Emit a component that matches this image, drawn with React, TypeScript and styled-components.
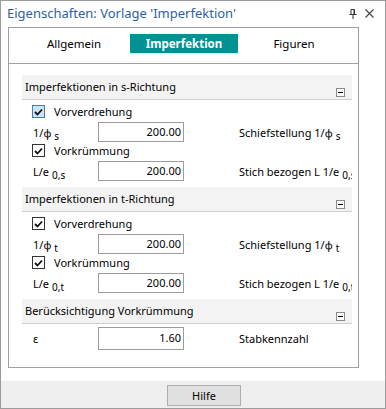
import React from 'react';
import styled, { createGlobalStyle } from 'styled-components';

interface Field {
  kind: 'check' | 'value';
  label: string;
  sub?: string;
  value?: string;
  hint?: string;
  hintSub?: string;
  checked?: boolean;
  focus?: boolean;
}

interface SectionData {
  title: string;
  rows: Field[];
  tall?: boolean;
}

const sections: SectionData[] = [
  {
    title: 'Imperfektionen in s-Richtung',
    rows: [
      { kind: 'check', label: 'Vorverdrehung', checked: true, focus: true },
      { kind: 'value', label: '1/φ', sub: 's', value: '200.00', hint: 'Schiefstellung 1/φ', hintSub: 's' },
      { kind: 'check', label: 'Vorkrümmung', checked: true },
      { kind: 'value', label: 'L/e', sub: '0,s', value: '200.00', hint: 'Stich bezogen L 1/e', hintSub: '0,s' },
    ],
  },
  {
    title: 'Imperfektionen in t-Richtung',
    rows: [
      { kind: 'check', label: 'Vorverdrehung', checked: true },
      { kind: 'value', label: '1/φ', sub: 't', value: '200.00', hint: 'Schiefstellung 1/φ', hintSub: 't' },
      { kind: 'check', label: 'Vorkrümmung', checked: true },
      { kind: 'value', label: 'L/e', sub: '0,t', value: '200.00', hint: 'Stich bezogen L 1/e', hintSub: '0,t' },
    ],
  },
  {
    title: 'Berücksichtigung Vorkrümmung',
    tall: true,
    rows: [
      { kind: 'value', label: 'ε', value: '1.60', hint: 'Stabkennzahl' },
    ],
  },
];

const tabs = ['Allgemein', 'Imperfektion', 'Figuren'];

const App: React.FC = () => {
  return (
    <>
      <GlobalStyle />
      <Window>
        <TitleBar>
          <Title>Eigenschaften: Vorlage 'Imperfektion'</Title>
          <TitleButtons>
            <svg width="8" height="10" viewBox="0 0 8 10">
              <path d="M2 0.5 V5.5 M5.5 0.5 V5.5 M0.5 5.5 H7.5 M2 0.5 H5.5 M4 5.5 V10" stroke="#333" strokeWidth="1" fill="none" />
              <rect x="4.5" y="1" width="1" height="4.5" fill="#333" />
            </svg>
            <svg width="9" height="9" viewBox="0 0 9 9">
              <path d="M0.5 0.5 L8.5 8.5 M8.5 0.5 L0.5 8.5" stroke="#444" strokeWidth="1.1" fill="none" />
            </svg>
          </TitleButtons>
        </TitleBar>
        <Body>
          <Panel>
            <TabBar>
              {tabs.map(t => (
                <Tab key={t} active={t === 'Imperfektion'}>{t}</Tab>
              ))}
            </TabBar>
            <Content>
              {sections.map(s => (
                <Section key={s.title}>
                  <SectionHeader>
                    <span>{s.title}</span>
                    <CollapseBox />
                  </SectionHeader>
                  <SectionBody tall={s.tall}>
                    {s.rows.map((r, i) =>
                      r.kind === 'check' ? (
                        <CheckRow key={i}>
                          <CheckBox focus={r.focus}>
                            {r.checked && (
                              <svg width="9" height="8" viewBox="0 0 9 8">
                                <path d="M1 4 L3.5 6.5 L8 1.5" stroke="#111" strokeWidth="1.8" fill="none" />
                              </svg>
                            )}
                          </CheckBox>
                          <span>{r.label}</span>
                        </CheckRow>
                      ) : (
                        <FieldRow key={i} tall={s.tall}>
                          <FieldLabel>
                            {r.label}
                            {r.sub && <Sub>{r.sub}</Sub>}
                          </FieldLabel>
                          <NumberBox tall={s.tall}>{r.value}</NumberBox>
                          <Hint>
                            {r.hint}
                            {r.hintSub && <Sub>{r.hintSub}</Sub>}
                          </Hint>
                        </FieldRow>
                      )
                    )}
                  </SectionBody>
                </Section>
              ))}
            </Content>
          </Panel>
        </Body>
        <Footer>
          <HelpButton>Hilfe</HelpButton>
        </Footer>
      </Window>
    </>
  );
};

const GlobalStyle = createGlobalStyle`
  html, body {
    margin: 0;
    padding: 0;
    background: #ffffff;
  }
  body {
    font-family: "Noto Sans", "Open Sans", sans-serif;
    font-size: 11px;
    color: #000;
  }
  * {
    box-sizing: border-box;
  }
`;

const Window = styled.div`
  width: 386px;
  height: 409px;
  border: 1px solid #9b9b9b;
  background: #fff;
  display: flex;
  flex-direction: column;
  overflow: hidden;
`;

const TitleBar = styled.div`
  height: 26px;
  display: flex;
  align-items: center;
  justify-content: space-between;
  padding: 0 11px 2px 6px;
`;

const Title = styled.span`
  font-size: 13px;
  color: #2f5fa3;
  white-space: nowrap;
`;

const TitleButtons = styled.div`
  display: flex;
  align-items: center;
  gap: 8px;
  margin-top: 1px;
`;

const Body = styled.div`
  padding: 0 26px 0 7px;
  height: 354px;
`;

const Panel = styled.div`
  width: 351px;
  height: 341px;
  border: 1px solid #a0a0a0;
  display: flex;
  flex-direction: column;
`;

const TabBar = styled.div`
  height: 36px;
  border-bottom: 1px solid #a0a0a0;
  display: flex;
  gap: 2px;
  padding: 6px 0 0 11px;
`;

const Tab = styled.div<{ active?: boolean }>`
  width: 108px;
  height: 19px;
  display: flex;
  align-items: center;
  justify-content: center;
  font-size: 11.5px;
  font-weight: ${({ active }) => (active ? 700 : 400)};
  color: ${({ active }) => (active ? '#fff' : '#000')};
  background: ${({ active }) => (active ? '#009292' : 'transparent')};
`;

const Content = styled.div`
  padding: 11px 6px 0 13px;
  display: flex;
  flex-direction: column;
`;

const Section = styled.div`
  display: flex;
  flex-direction: column;
  overflow: hidden;
`;

const SectionHeader = styled.div`
  position: relative;
  height: 25px;
  background: #f3f3f3;
  border-bottom: 1px solid #cfcfcf;
  padding: 0 0 2px 3px;
  display: flex;
  align-items: center;
  white-space: nowrap;
`;

const CollapseBox = styled.div`
  position: absolute;
  right: 7px;
  bottom: 2px;
  width: 9px;
  height: 9px;
  border: 1px solid #8a8a8a;
  background: #fff;
  &::after {
    content: '';
    position: absolute;
    left: 1px;
    right: 1px;
    top: 3px;
    height: 1px;
    background: #000;
  }
`;

const SectionBody = styled.div<{ tall?: boolean }>`
  display: flex;
  flex-direction: column;
  padding: ${({ tall }) => (tall ? '1px 0 0' : '3px 0 6px')};
`;

const CheckRow = styled.div`
  height: 17px;
  display: flex;
  align-items: center;
  gap: 9px;
  padding-left: 10px;
  white-space: nowrap;
`;

const CheckBox = styled.div<{ focus?: boolean }>`
  width: 13px;
  height: 13px;
  flex-shrink: 0;
  border: 1px solid ${({ focus }) => (focus ? '#3f7fb8' : '#333')};
  background: ${({ focus }) => (focus ? '#cce4f7' : '#fff')};
  display: flex;
  align-items: center;
  justify-content: center;
`;

const FieldRow = styled.div<{ tall?: boolean }>`
  height: ${({ tall }) => (tall ? '23px' : '20px')};
  margin-top: 2px;
  display: flex;
  align-items: center;
  padding-left: 11px;
  white-space: nowrap;
`;

const FieldLabel = styled.div`
  width: 65px;
  flex-shrink: 0;
`;

const Sub = styled.span`
  font-size: 10px;
  margin-left: 3px;
  position: relative;
  top: 3px;
`;

const NumberBox = styled.div<{ tall?: boolean }>`
  width: 86px;
  flex-shrink: 0;
  height: ${({ tall }) => (tall ? '23px' : '20px')};
  border: 1px solid #9c9c9c;
  text-align: right;
  padding-right: 2px;
  line-height: ${({ tall }) => (tall ? '20px' : '17px')};
`;

const Hint = styled.div`
  margin-left: 55px;
  flex-shrink: 0;
`;

const Footer = styled.div`
  flex: 1;
  background: #efefef;
  padding: 4px 0 0 166px;
`;

const HelpButton = styled.div`
  width: 74px;
  height: 21px;
  border: 1px solid #adadad;
  background: #e1e1e1;
  display: flex;
  align-items: center;
  justify-content: center;
`;

export default App;
